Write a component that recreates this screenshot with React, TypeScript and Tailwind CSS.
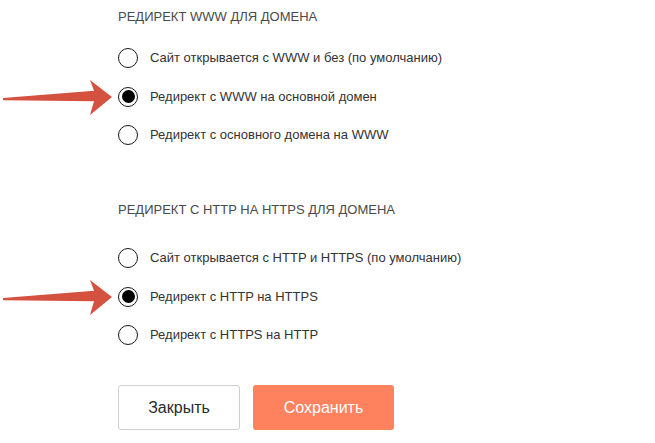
const sectionOne = [
  { id: 'both', label: 'Сайт открывается с WWW и без (по умолчанию)' },
  { id: 'to-main', label: 'Редирект с WWW на основной домен' },
  { id: 'to-www', label: 'Редирект с основного домена на WWW' },
];

const sectionTwo = [
  { id: 'both', label: 'Сайт открывается с HTTP и HTTPS (по умолчанию)' },
  { id: 'to-https', label: 'Редирект с HTTP на HTTPS' },
  { id: 'to-http', label: 'Редирект с HTTPS на HTTP' },
];

function Arrow() {
  return (
    <svg
      className="absolute left-[-115px] top-[-8px]"
      width="110"
      height="37"
      viewBox="0 0 110 37"
    >
      <polygon
        points="0,19 91,11.8 87,1 109,18 87,36 91,22.2 0,21.2"
        fill="#d4503f"
      />
    </svg>
  );
}

function Radio({ checked }: { checked: boolean }) {
  return (
    <span className="flex h-5 w-5 shrink-0 items-center justify-center rounded-full border-[1.5px] border-[#1a1a1a] bg-white">
      {checked && <span className="h-[13px] w-[13px] rounded-full bg-black" />}
    </span>
  );
}

function Option({ label, checked }: { label: string; checked: boolean }) {
  return (
    <label className="relative flex h-5 items-center gap-3 text-[13px] text-[#333]">
      {checked && <Arrow />}
      <Radio checked={checked} />
      <span>{label}</span>
    </label>
  );
}

export default function App() {
  const font = { fontFamily: '"Liberation Sans", Arial, sans-serif' };
  return (
    <div className="min-h-[443px] w-[655px] bg-white pl-[118px] pt-[7px]" style={font}>
      <h3 className="text-[13px] leading-5 text-[#4a4a4a]">РЕДИРЕКТ WWW ДЛЯ ДОМЕНА</h3>
      <div className="mt-[21px] flex flex-col gap-[18.5px]">
        {sectionOne.map((o) => (
          <Option key={o.id} label={o.label} checked={o.id === 'to-main'} />
        ))}
      </div>

      <h3 className="mt-[55px] text-[13px] leading-5 text-[#4a4a4a]">
        РЕДИРЕКТ С HTTP НА HTTPS ДЛЯ ДОМЕНА
      </h3>
      <div className="mt-[28px] flex flex-col gap-[18.5px]">
        {sectionTwo.map((o) => (
          <Option key={o.id} label={o.label} checked={o.id === 'to-https'} />
        ))}
      </div>

      <div className="mt-10 flex gap-[13px]">
        <button className="h-[45px] w-[122px] rounded-[3px] border border-[#cfcfcf] bg-white text-base text-[#2b2b2b]">
          Закрыть
        </button>
        <button className="h-[45px] w-[141px] rounded-[3px] bg-[#ff825f] text-base text-white">
          Сохранить
        </button>
      </div>
    </div>
  );
}
